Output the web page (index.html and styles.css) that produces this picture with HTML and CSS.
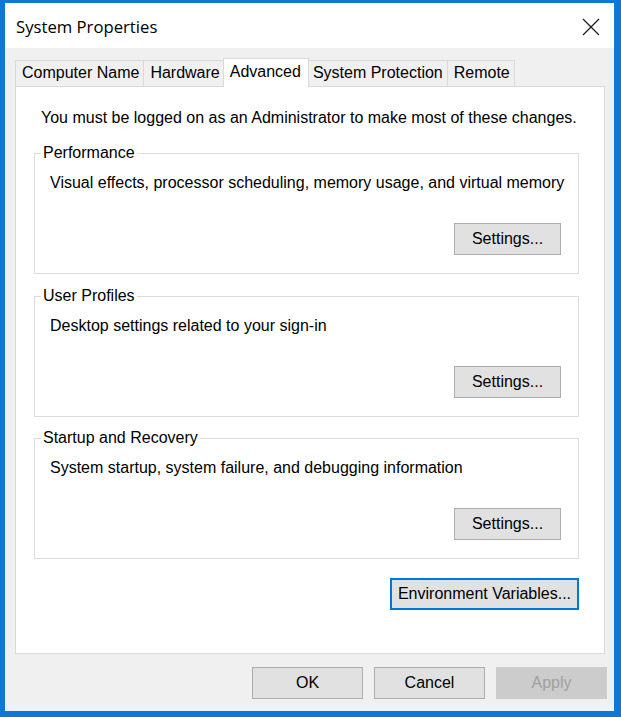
FILE: index.html
```html
<!DOCTYPE html>
<html>
<head>
<meta charset="utf-8">
<title>System Properties</title>
<link rel="stylesheet" href="styles.css">
</head>
<body>
<div class="window">
  <div class="titlebar">
    <span class="title">System Properties</span>
    <svg class="close" width="18" height="18" viewBox="0 0 18 18"><path d="M1 1 L17 17 M17 1 L1 17" stroke="#1a1a1a" stroke-width="1.2" fill="none"/></svg>
  </div>
  <div class="client">
    <div class="tabs">
      <div class="tab">Computer Name</div>
      <div class="tab">Hardware</div>
      <div class="tab selected">Advanced</div>
      <div class="tab">System Protection</div>
      <div class="tab">Remote</div>
    </div>
    <div class="panel">
      <p class="intro">You must be logged on as an Administrator to make most of these changes.</p>
      <fieldset class="group">
        <legend>Performance</legend>
        <p class="desc">Visual effects, processor scheduling, memory usage, and virtual memory</p>
        <div class="row"><button class="btn">Settings...</button></div>
      </fieldset>
      <fieldset class="group">
        <legend>User Profiles</legend>
        <p class="desc">Desktop settings related to your sign-in</p>
        <div class="row"><button class="btn">Settings...</button></div>
      </fieldset>
      <fieldset class="group group-last">
        <legend>Startup and Recovery</legend>
        <p class="desc">System startup, system failure, and debugging information</p>
        <div class="row"><button class="btn">Settings...</button></div>
      </fieldset>
      <div class="row env-row"><button class="btn focused">Environment Variables...</button></div>
    </div>
    <div class="footer">
      <button class="btn dlg">OK</button>
      <button class="btn dlg">Cancel</button>
      <button class="btn dlg disabled">Apply</button>
    </div>
  </div>
</div>
</body>
</html>
```
FILE: styles.css
```css
html, body {
  margin: 0;
  padding: 0;
}
body {
  width: 621px;
  height: 717px;
  overflow: hidden;
  background: #0f78d4;
  font-family: "Liberation Sans", Arial, sans-serif;
  font-size: 16px;
  color: #000;
}
.window {
  margin: 3px 0 0 5px;
  width: 609px;
  height: 708px;
  background: #f0f0f0;
  display: flex;
  flex-direction: column;
}
.titlebar {
  height: 45px;
  box-sizing: border-box;
  background: #fff;
  display: flex;
  align-items: center;
  justify-content: space-between;
  padding: 2px 14px 0 11px;
}
.title {
  font-family: "Open Sans", "Noto Sans", sans-serif;
  font-size: 16.7px;
  color: #000;
}
.close {
  display: block;
}
.client {
  flex: 1;
  padding: 10px 9px 0 10px;
}
.tabs {
  display: flex;
  align-items: flex-end;
  height: 28px;
  position: relative;
  z-index: 1;
}
.tab {
  height: 26px;
  box-sizing: border-box;
  border: 1px solid #d9d9d9;
  border-bottom: none;
  background: #f0f0f0;
  padding: 0 4px 0 6px;
  line-height: 24px;
  margin-left: -1px;
  white-space: nowrap;
}
.tab:first-child {
  margin-left: 0;
}
.tab.selected {
  height: 29px;
  background: #fff;
  margin: 0 -2px -1px -2px;
  padding: 0 7px 0 6px;
  line-height: 26px;
  position: relative;
  z-index: 2;
}
.panel {
  height: 568px;
  box-sizing: border-box;
  background: #fff;
  border: 1px solid #d9d9d9;
  padding: 22px 25px 0 18px;
}
.intro {
  margin: 0 0 17px 7px;
  line-height: 18px;
  white-space: nowrap;
}
.group {
  margin: 0 0 13px 0;
  border: 1px solid #dcdcdc;
  padding: 0 17px 18px 15px;
  min-width: 0;
}
.group-last {
  margin-bottom: 0;
}
.group + .group-last {
  margin-top: -1px;
}
.group legend {
  margin-left: -9px;
  padding: 0 2px;
  line-height: 18px;
}
.desc {
  margin: 12px 0 0 0;
  line-height: 18px;
  white-space: nowrap;
}
.row {
  display: flex;
  justify-content: flex-end;
  margin-top: 31px;
}
.btn {
  font-family: "Liberation Sans", Arial, sans-serif;
  font-size: 16px;
  color: #000;
  background: #e1e1e1;
  border: 1px solid #adadad;
  height: 32px;
  width: 107px;
  padding: 0;
  margin: 0;
}
.env-row {
  margin-top: 19px;
}
.btn.focused {
  width: 189px;
  border: 2px solid #0078d7;
}
.footer {
  display: flex;
  justify-content: flex-end;
  gap: 11px;
  margin: 13px -2px 0 0;
}
.btn.dlg {
  width: 111px;
}
.btn.disabled {
  background: #cccccc;
  border-color: #cccccc;
  color: #a0a0a0;
}
```
